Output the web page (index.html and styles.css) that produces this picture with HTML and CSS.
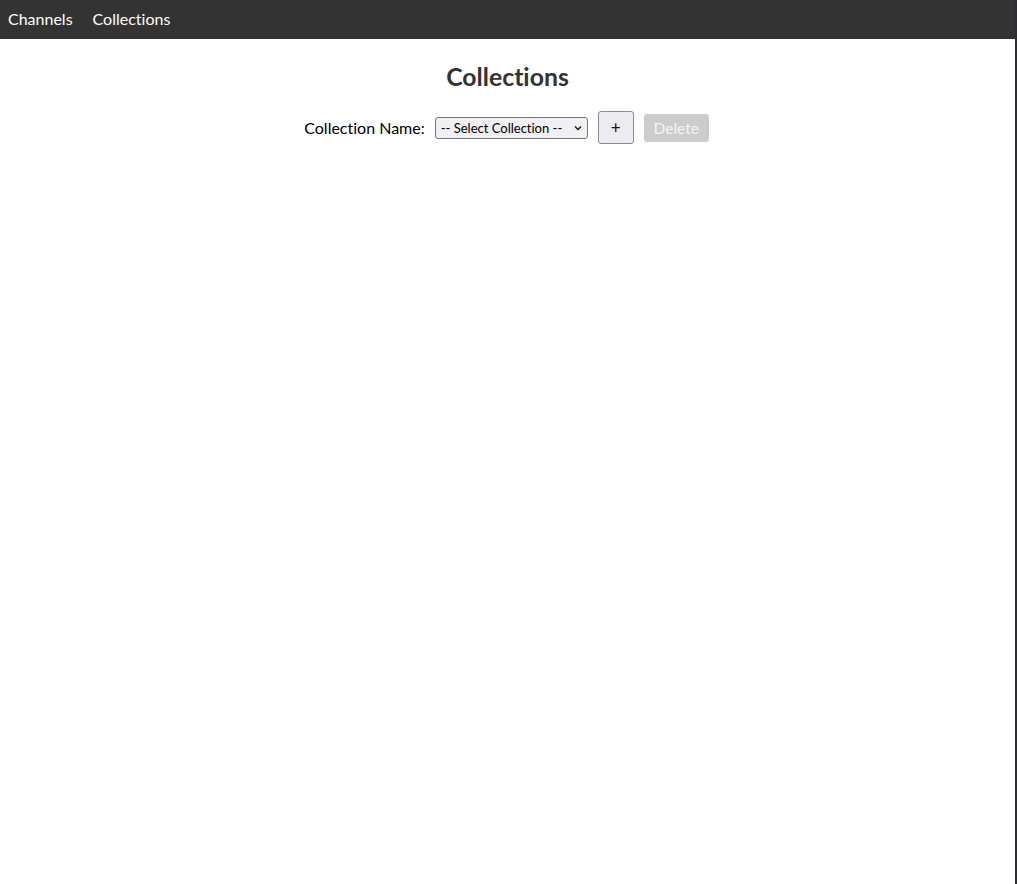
FILE: index.html
```html
<!DOCTYPE html>
<html>
<head>
<meta charset="utf-8">
<link rel="stylesheet" href="styles.css">
</head>
<body>
<nav class="nav">
  <a class="nav-link" href="#">Channels</a>
  <a class="nav-link" href="#">Collections</a>
</nav>
<main class="main">
  <h1 class="title">Collections</h1>
  <div class="row">
    <label class="label" for="coll">Collection Name:</label>
    <div class="select-wrap">
      <select id="coll" class="select">
        <option>-- Select Collection --</option>
      </select>
      <svg class="chevron" width="8" height="6" viewBox="0 0 8 6"><path d="M1 1.5 L4 4.5 L7 1.5" fill="none" stroke="#111" stroke-width="1.3"/></svg>
    </div>
    <button class="btn-add">+</button>
    <button class="btn-delete" disabled>Delete</button>
  </div>
</main>
</body>
</html>
```
FILE: styles.css
```css
html, body {
  margin: 0;
  padding: 0;
  background: #fff;
}
body {
  font-family: Lato, "Open Sans", sans-serif;
  font-variant-ligatures: none;
  color: #000;
  width: 1015px;
  min-height: 884px;
  border-right: 2px solid #2c2c3a;
}
.nav {
  height: 39px;
  background: #333333;
  display: flex;
  align-items: center;
  gap: 20px;
  padding: 0 8px 2px;
  box-sizing: border-box;
}
.nav-link {
  color: #fff;
  text-decoration: none;
  font-size: 16px;
}
.main {
  display: flex;
  flex-direction: column;
  align-items: center;
}
.title {
  margin: 23px 0 0;
  font-size: 24.8px;
  font-weight: bold;
  color: #333;
  line-height: 30px;
}
.row {
  margin-top: 19px;
  display: flex;
  align-items: center;
  margin-left: -2px;
}
.label {
  font-size: 16px;
  margin-right: 10px;
}
.select-wrap {
  position: relative;
  margin-right: 10px;
  display: flex;
}
.select {
  appearance: none;
  -webkit-appearance: none;
  width: 153px;
  height: 22px;
  font-family: Lato, sans-serif;
  font-variant-ligatures: none;
  font-size: 13px;
  color: #000;
  border: 1px solid #767676;
  border-radius: 3px;
  background: #efeff4;
  padding: 0 0 0 5px;
  margin: 0;
}
.chevron {
  position: absolute;
  right: 6px;
  top: 8px;
  pointer-events: none;
}
.btn-add {
  width: 36px;
  height: 33px;
  background: #ebebf0;
  border: 1px solid #8a8a96;
  border-radius: 3px;
  font-size: 17px;
  font-family: Lato, sans-serif;
  margin-right: 10px;
  padding: 0;
  color: #111;
}
.btn-delete {
  width: 65px;
  height: 28px;
  background: #cccccc;
  color: #f4f4f4;
  border: none;
  border-radius: 3px;
  font-size: 15.5px;
  font-family: Lato, sans-serif;
  padding: 0;
}
```
